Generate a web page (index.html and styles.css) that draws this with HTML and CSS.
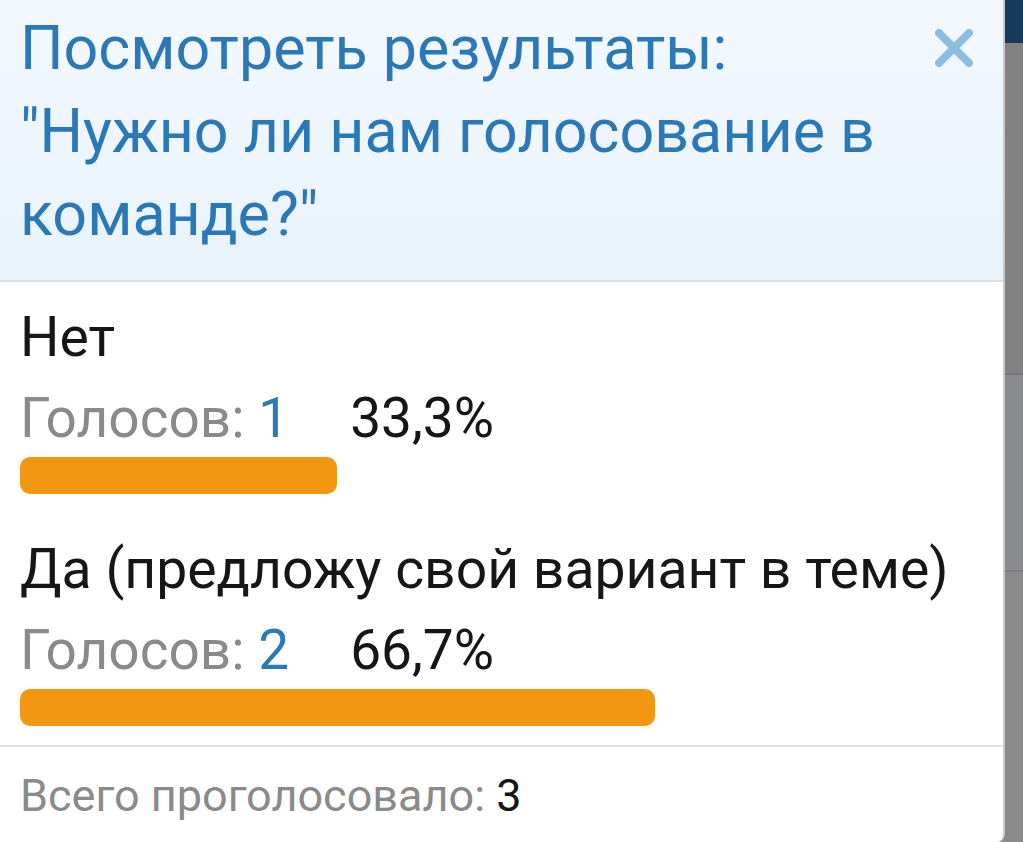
FILE: index.html
```html
<!DOCTYPE html>
<html lang="ru">
<head>
<meta charset="utf-8">
<title>Посмотреть результаты</title>
<link rel="stylesheet" href="styles.css">
</head>
<body>
<div class="screen">
  <div class="panel">
    <div class="header">
      <h1 class="title">Посмотреть результаты: "Нужно ли нам голосование в команде?"</h1>
      <button class="close" aria-label="Закрыть">
        <svg width="38" height="38" viewBox="0 0 38 38"><path d="M4 4 L34 34 M34 4 L4 34" stroke="#8dbee1" stroke-width="8" stroke-linecap="round" fill="none"/></svg>
      </button>
    </div>
    <div class="results">
      <div class="option">
        <div class="label">Нет</div>
        <div class="votes"><span class="muted">Голосов: </span><span class="count">1</span><span class="pct">33,3%</span></div>
        <div class="track"><div class="bar" style="width:33.3%"></div></div>
      </div>
      <div class="option">
        <div class="label">Да (предложу свой вариант в теме)</div>
        <div class="votes"><span class="muted">Голосов: </span><span class="count">2</span><span class="pct">66,7%</span></div>
        <div class="track"><div class="bar" style="width:66.7%"></div></div>
      </div>
    </div>
    <div class="footer"><span class="muted">Всего проголосовало: </span><span class="total">3</span></div>
  </div>
  <div class="side">
    <div class="side-top"></div>
    <div class="side-mid"></div>
    <div class="side-low"></div>
    <div class="side-bottom"></div>
  </div>
</div>
</body>
</html>
```

FILE: styles.css
```css
html, body {
  margin: 0;
  padding: 0;
}
body {
  font-family: Roboto, "Noto Sans", "Liberation Sans", sans-serif;
  background: #8a8a8a;
  overflow: hidden;
}
.screen {
  display: flex;
  width: 1023px;
  height: 842px;
  overflow: hidden;
}
.panel {
  width: 1003px;
  flex: none;
  background: #ffffff;
  border-right: 2px solid #c9c9c9;
  border-bottom-right-radius: 8px;
  display: flex;
  flex-direction: column;
}
.header {
  display: flex;
  align-items: flex-start;
  background: linear-gradient(#f3f8fe, #e9f3fc);
  border-bottom: 2px solid #dde1e4;
  padding: 7px 30px 24px 20px;
}
.title {
  flex: 1;
  margin: 0;
  font-weight: 400;
  font-size: 61px;
  line-height: 83px;
  color: #2a78b5;
}
.close {
  flex: none;
  border: 0;
  background: none;
  padding: 0;
  margin: 22px 0 0 0;
  width: 38px;
  height: 38px;
  display: block;
}
.close svg {
  display: block;
}
.results {
  padding: 20px 31px 19px 20px;
  display: flex;
  flex-direction: column;
  gap: 40px;
}
.option {
  display: flex;
  flex-direction: column;
}
.label {
  font-size: 55.3px;
  line-height: 72px;
  color: #161616;
  white-space: nowrap;
}
.votes {
  font-size: 55px;
  line-height: 64px;
  margin-top: 12px;
  white-space: nowrap;
}
.muted {
  color: #8a8a8a;
}
.count {
  color: #2a7ab8;
}
.pct {
  color: #161616;
  margin-left: 61px;
}
.track {
  margin-top: 7px;
  height: 37px;
}
.bar {
  height: 37px;
  background: #f39612;
  border-radius: 10px;
}
.footer {
  border-top: 2px solid #e2e2e2;
  padding: 23px 20px 0 20px;
  font-size: 45px;
  line-height: 52px;
  white-space: nowrap;
}
.total {
  color: #161616;
}
.side {
  flex: 1;
  display: flex;
  flex-direction: column;
}
.side-top {
  height: 43px;
  background: #173a5b;
}
.side-mid {
  height: 330px;
  background: #828282;
  border-bottom: 2px solid #767676;
}
.side-low {
  height: 195px;
  background: #898b8e;
  border-bottom: 2px solid #7c7c7c;
}
.side-bottom {
  flex: 1;
  background: #8a8a8a;
}
```
